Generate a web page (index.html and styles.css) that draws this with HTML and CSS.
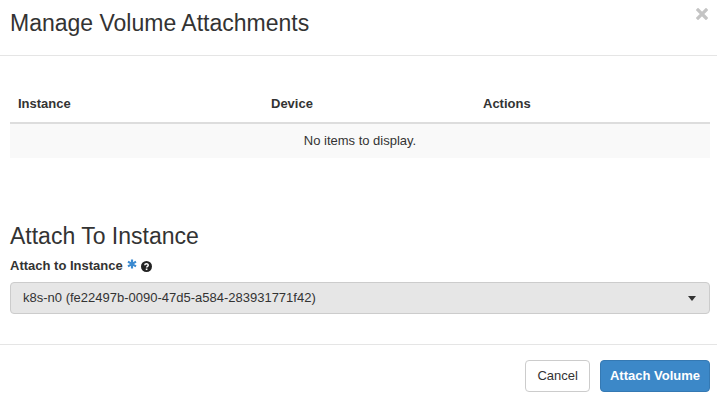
FILE: index.html
```html
<!DOCTYPE html>
<html lang="en">
<head>
    <meta charset="UTF-8">
    <meta name="viewport" content="width=device-width, initial-scale=1.0">
    <title>Manage Volume Attachments</title>
    <link rel="stylesheet" href="styles.css">
</head>
<body>
    <div class="modal">
        <div class="modal-header">
            <h4 class="modal-title">Manage Volume Attachments</h4>
            <button class="close" type="button" aria-label="Close">
                <svg width="12" height="12" viewBox="0 0 12 12">
                    <path d="M2 2 L10 10 M10 2 L2 10" stroke="currentColor" stroke-width="3.2" stroke-linecap="square"/>
                </svg>
            </button>
        </div>

        <div class="modal-body">
            <table class="table">
                <thead>
                    <tr>
                        <th class="col-instance">Instance</th>
                        <th class="col-device">Device</th>
                        <th>Actions</th>
                    </tr>
                </thead>
                <tbody>
                    <tr>
                        <td class="empty" colspan="3">No items to display.</td>
                    </tr>
                </tbody>
            </table>

            <h3 class="section-title">Attach To Instance</h3>

            <div class="form-group">
                <label class="control-label">
                    Attach to Instance
                    <span class="required">
                        <svg width="10" height="10" viewBox="0 0 12 12">
                            <path d="M6 0.5 V11.5 M1.2 3.2 L10.8 8.8 M10.8 3.2 L1.2 8.8" stroke="currentColor" stroke-width="2.6"/>
                        </svg>
                    </span>
                    <span class="help-icon">
                        <svg width="11" height="11" viewBox="0 0 12 12">
                            <circle cx="6" cy="6" r="6" fill="#222"/>
                            <path d="M4.1 4.6 C4.1 2.6 7.9 2.6 7.9 4.5 C7.9 5.8 6.1 5.8 6.1 7.2" stroke="#fff" stroke-width="1.6" fill="none"/>
                            <rect x="5.2" y="8.2" width="1.8" height="1.7" fill="#fff"/>
                        </svg>
                    </span>
                </label>
                <div class="select">
                    <span>k8s-n0 (fe22497b-0090-47d5-a584-283931771f42)</span>
                    <span class="caret"></span>
                </div>
            </div>
        </div>

        <div class="modal-footer">
            <button class="btn btn-default" type="button">Cancel</button>
            <button class="btn btn-primary" type="button">Attach Volume</button>
        </div>
    </div>
</body>
</html>
```

FILE: styles.css
```css
body {
    margin: 0;
    background: #fff;
    color: #333;
    font-family: "Liberation Sans", Arial, Helvetica, sans-serif;
    font-size: 13px;
    line-height: 1.42857;
}

.modal {
    width: 717px;
}

.modal-header {
    display: flex;
    justify-content: space-between;
    align-items: flex-start;
    height: 56px;
    padding: 0 9px 0 10px;
    border-bottom: 1px solid #e5e5e5;
    box-sizing: border-box;
}

.modal-title {
    margin: 10px 0 0;
    font-size: 23px;
    font-weight: normal;
    line-height: 26px;
    color: #333;
}

.close {
    margin-top: 8px;
    padding: 0;
    border: none;
    background: none;
    color: #c4c4c4;
}

.modal-body {
    padding: 30px 7px 0 10px;
}

.table {
    width: 100%;
    border-collapse: collapse;
    border-spacing: 0;
}

.table th {
    padding: 8px;
    text-align: left;
    font-weight: bold;
    line-height: 20px;
    color: #333;
    border-bottom: 2px solid #ddd;
}

.table .col-instance {
    width: 237px;
}

.table .col-device {
    width: 196px;
}

.table td {
    padding: 8px;
    line-height: 18px;
}

.table .empty {
    text-align: center;
    background: #f9f9f9;
}

.section-title {
    margin: 65px 0 0;
    font-size: 23px;
    font-weight: normal;
    line-height: 26px;
    color: #333;
}

.form-group {
    margin-top: 7px;
}

.control-label {
    display: flex;
    align-items: center;
    gap: 4px;
    font-weight: bold;
    line-height: 20px;
}

.required {
    display: inline-flex;
    color: #3b8ad0;
    margin-top: -4px;
}

.help-icon {
    display: inline-flex;
}

.select {
    display: flex;
    justify-content: space-between;
    align-items: center;
    height: 32px;
    margin-top: 6px;
    padding: 0 13px 0 12px;
    background: #e6e6e6;
    border: 1px solid #cccccc;
    border-radius: 4px;
    box-sizing: border-box;
    color: #333;
    font-size: 13px;
}

.caret {
    width: 0;
    height: 0;
    border-top: 5px solid #333;
    border-left: 4px solid transparent;
    border-right: 4px solid transparent;
}

.modal-footer {
    display: flex;
    justify-content: flex-end;
    gap: 10px;
    margin-top: 30px;
    padding: 15px 7px 15px 10px;
    border-top: 1px solid #e5e5e5;
}

.btn {
    height: 32px;
    padding: 0 11px;
    border-radius: 4px;
    font-family: inherit;
    font-size: 13px;
    line-height: 30px;
    cursor: pointer;
}

.btn-default {
    background: #fff;
    color: #333;
    border: 1px solid #ccc;
}

.btn-primary {
    padding: 0 9px;
    background: #3c88c8;
    color: #fff;
    border: 1px solid #3579b3;
    font-weight: bold;
}
```
